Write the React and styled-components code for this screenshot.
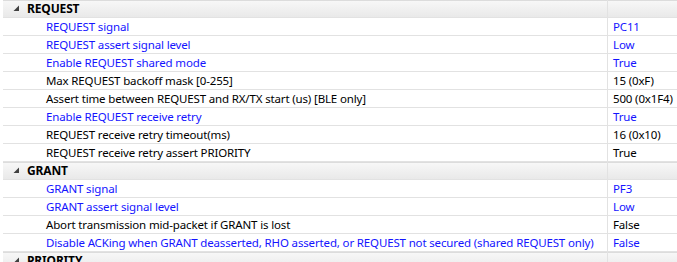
import React from "react";
import styled, { createGlobalStyle } from "styled-components";

const Global = createGlobalStyle`
  html, body { margin: 0; padding: 0; background: #fff; }
  body { font-family: "Noto Sans", "Open Sans", sans-serif; font-size: 11.5px; letter-spacing: -0.15px; }
`;

const Sheet = styled.div`
  width: 677px;
  height: 262px;
  overflow: hidden;
  padding-left: 3px;
  box-sizing: border-box;
`;

const Row = styled.div`
  display: grid;
  grid-template-columns: 604px 1fr;
  height: 17px;
  border-bottom: 1px solid #e2e2e2;
  line-height: 17px;
  white-space: nowrap;
  background: ${(p) => (p.$category ? "linear-gradient(#f8f8f8, #e9e9e9)" : "#fff")};
  box-shadow: ${(p) => (p.$category ? "inset 0 1px 0 #dcdcdc" : "none")};
`;

const NameCell = styled.div`
  display: flex;
  align-items: center;
  padding-left: ${(p) => (p.$category ? "10px" : "43px")};
  color: ${(p) => (p.$blue ? "#1414ff" : "#000")};
  font-weight: ${(p) => (p.$category ? 700 : 400)};
  font-size: ${(p) => (p.$category ? "12px" : "inherit")};
  overflow: hidden;
`;

const ValueCell = styled.div`
  border-left: 1px solid #e2e2e2;
  padding-left: 5px;
  color: ${(p) => (p.$blue ? "#1414ff" : "#000")};
  overflow: hidden;
`;

const Expander = styled.svg`
  width: 7px;
  height: 7px;
  margin-right: 7px;
  flex: none;
`;

const data = [
  { cat: "REQUEST" },
  { name: "REQUEST signal", value: "PC11", blue: true },
  { name: "REQUEST assert signal level", value: "Low", blue: true },
  { name: "Enable REQUEST shared mode", value: "True", blue: true },
  { name: "Max REQUEST backoff mask [0-255]", value: "15 (0xF)" },
  { name: "Assert time between REQUEST and RX/TX start (us) [BLE only]", value: "500 (0x1F4)" },
  { name: "Enable REQUEST receive retry", value: "True", blue: true },
  { name: "REQUEST receive retry timeout(ms)", value: "16 (0x10)" },
  { name: "REQUEST receive retry assert PRIORITY", value: "True" },
  { cat: "GRANT" },
  { name: "GRANT signal", value: "PF3", blue: true },
  { name: "GRANT assert signal level", value: "Low", blue: true },
  { name: "Abort transmission mid-packet if GRANT is lost", value: "False" },
  {
    name: "Disable ACKing when GRANT deasserted, RHO asserted, or REQUEST not secured (shared REQUEST only)",
    value: "False",
    blue: true,
  },
  { cat: "PRIORITY" },
];

export default function App() {
  return (
    <>
      <Global />
      <Sheet>
        {data.map((r, i) =>
          r.cat ? (
            <Row key={i} $category>
              <NameCell $category>
                <Expander viewBox="0 0 7 7">
                  <polygon points="6,0.5 6,6 0.5,6" fill="#404040" />
                </Expander>
                {r.cat}
              </NameCell>
              <ValueCell />
            </Row>
          ) : (
            <Row key={i}>
              <NameCell $blue={r.blue}>{r.name}</NameCell>
              <ValueCell $blue={r.blue}>{r.value}</ValueCell>
            </Row>
          )
        )}
      </Sheet>
    </>
  );
}
